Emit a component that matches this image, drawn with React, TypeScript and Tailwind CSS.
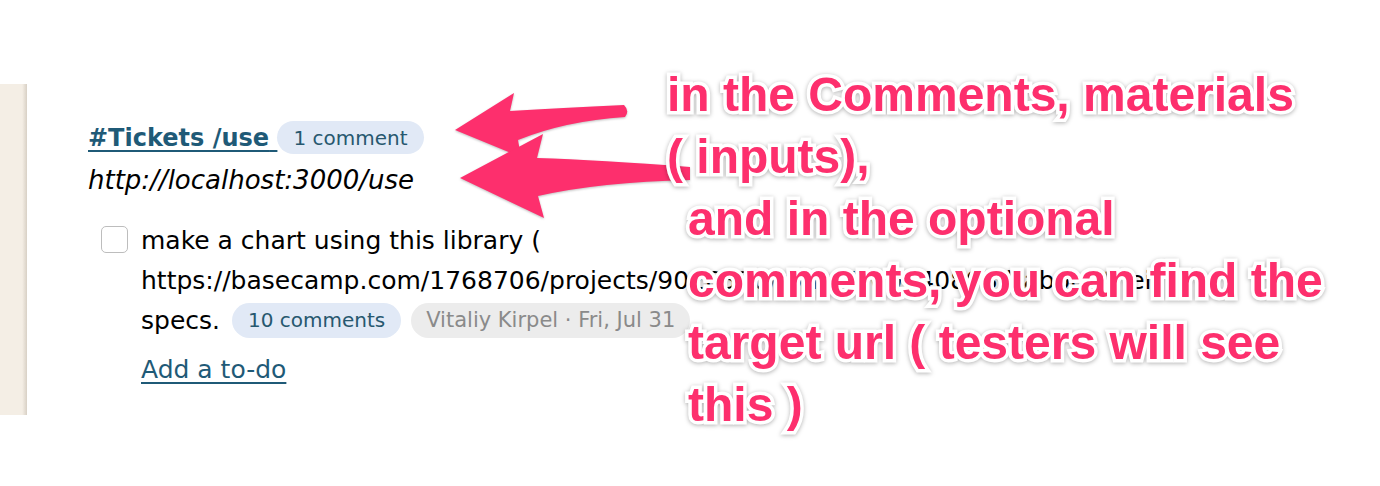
import React from "react";

const PINK = "#fd2f6d";

const noteLines = [
  { text: "in the Comments, materials", indent: false },
  { text: "( inputs),", indent: false },
  { text: "and in the optional", indent: true },
  { text: "comments, you can find the", indent: true },
  { text: "target url ( testers will see", indent: true },
  { text: "this )", indent: true },
];

const Arrows = () => (
  <svg
    className="absolute left-0 top-0 pointer-events-none [filter:drop-shadow(0_1px_1px_rgba(0,0,0,0.25))]"
    width="1380"
    height="486"
    viewBox="0 0 1380 486"
  >
    {/* upper arrow -> title */}
    <path
      d="M455 130 L514 93 L510 111 Q560 108 624 105 Q630 111 625 117 Q565 121 518 140 L521 157 Z"
      fill={PINK}
    />
    {/* lower arrow -> url */}
    <path
      d="M460 178 L543 134 L537 158 Q600 160 690 167 L690 180 Q600 182 538 196 L544 218 Z"
      fill={PINK}
    />
  </svg>
);

const Badge = ({ children, gray }: { children: React.ReactNode; gray?: boolean }) => (
  <span
    className={
      gray
        ? "inline-flex items-center h-[35px] px-[15px] rounded-full bg-[#ececec] text-[#8a8a8a] text-[21px] leading-none"
        : "inline-flex items-center h-[35px] px-[16px] rounded-full bg-[#e1e9f6] text-[#27586f] text-[20px] leading-none"
    }
  >
    {children}
  </span>
);

export default function App() {
  return (
    <div className="relative h-[486px] w-[1380px] overflow-hidden bg-white pt-[84px] font-['DejaVu_Sans',sans-serif] text-black">
      <div className="flex">
        {/* left sheet edge */}
        <div className="w-[27px] h-[331px] shrink-0 bg-[linear-gradient(to_right,#f4eee5_82%,#d8d0c5)]" />

        <div className="pl-[61px] pt-[37px]">
          <div className="flex items-center h-[33px]">
            <a className="text-[24px] font-bold text-[#1f5a77] underline underline-offset-[4px] decoration-[2px] whitespace-pre">
              #Tickets /use{" "}
            </a>
            <span className="ml-[0px] inline-flex items-center h-[33px] px-[16px] rounded-full bg-[#e1e9f6] text-[#27586f] text-[20px] leading-none">
              1 comment
            </span>
          </div>
          <div className="mt-[6px] italic text-[26px] leading-[40px]">http://localhost:3000/use</div>

          <div className="mt-[21px] ml-[13px] flex items-start">
            <div className="mt-[5px] w-[27px] h-[27px] shrink-0 rounded-[5px] border border-[#bdbdbd] bg-white" />
            <div className="ml-[13px] w-[1060px] text-[25px] leading-[40px]">
              make a chart using this library ( https://basecamp.com/1768706/projects/9026330/todos/200440893 ) about
              their specs.{" "}
              <span className="inline-flex gap-[10px] align-middle ml-[4px] -mt-[4px]">
                <Badge>10 comments</Badge>
                <Badge gray>Vitaliy Kirpel · Fri, Jul 31</Badge>
              </span>
            </div>
          </div>

          <div className="mt-[9px] ml-[53px] text-[25px] leading-[40px] text-[#1f5a77] underline underline-offset-[4px]">
            Add a to-do
          </div>
        </div>
      </div>

      <Arrows />

      {/* annotation text */}
      <div className="absolute left-[667px] top-[64px] font-['Liberation_Sans',Arial,sans-serif] font-bold text-[48px] leading-[62px] text-[#fd2f6d] [paint-order:stroke_fill] [-webkit-text-stroke:7px_white] [filter:drop-shadow(0_1px_2px_rgba(0,0,0,0.3))]">
        {noteLines.map((line) => (
          <div key={line.text} className={line.indent ? "whitespace-pre pl-[21px]" : "whitespace-pre"}>
            {line.text}
          </div>
        ))}
      </div>
    </div>
  );
}
